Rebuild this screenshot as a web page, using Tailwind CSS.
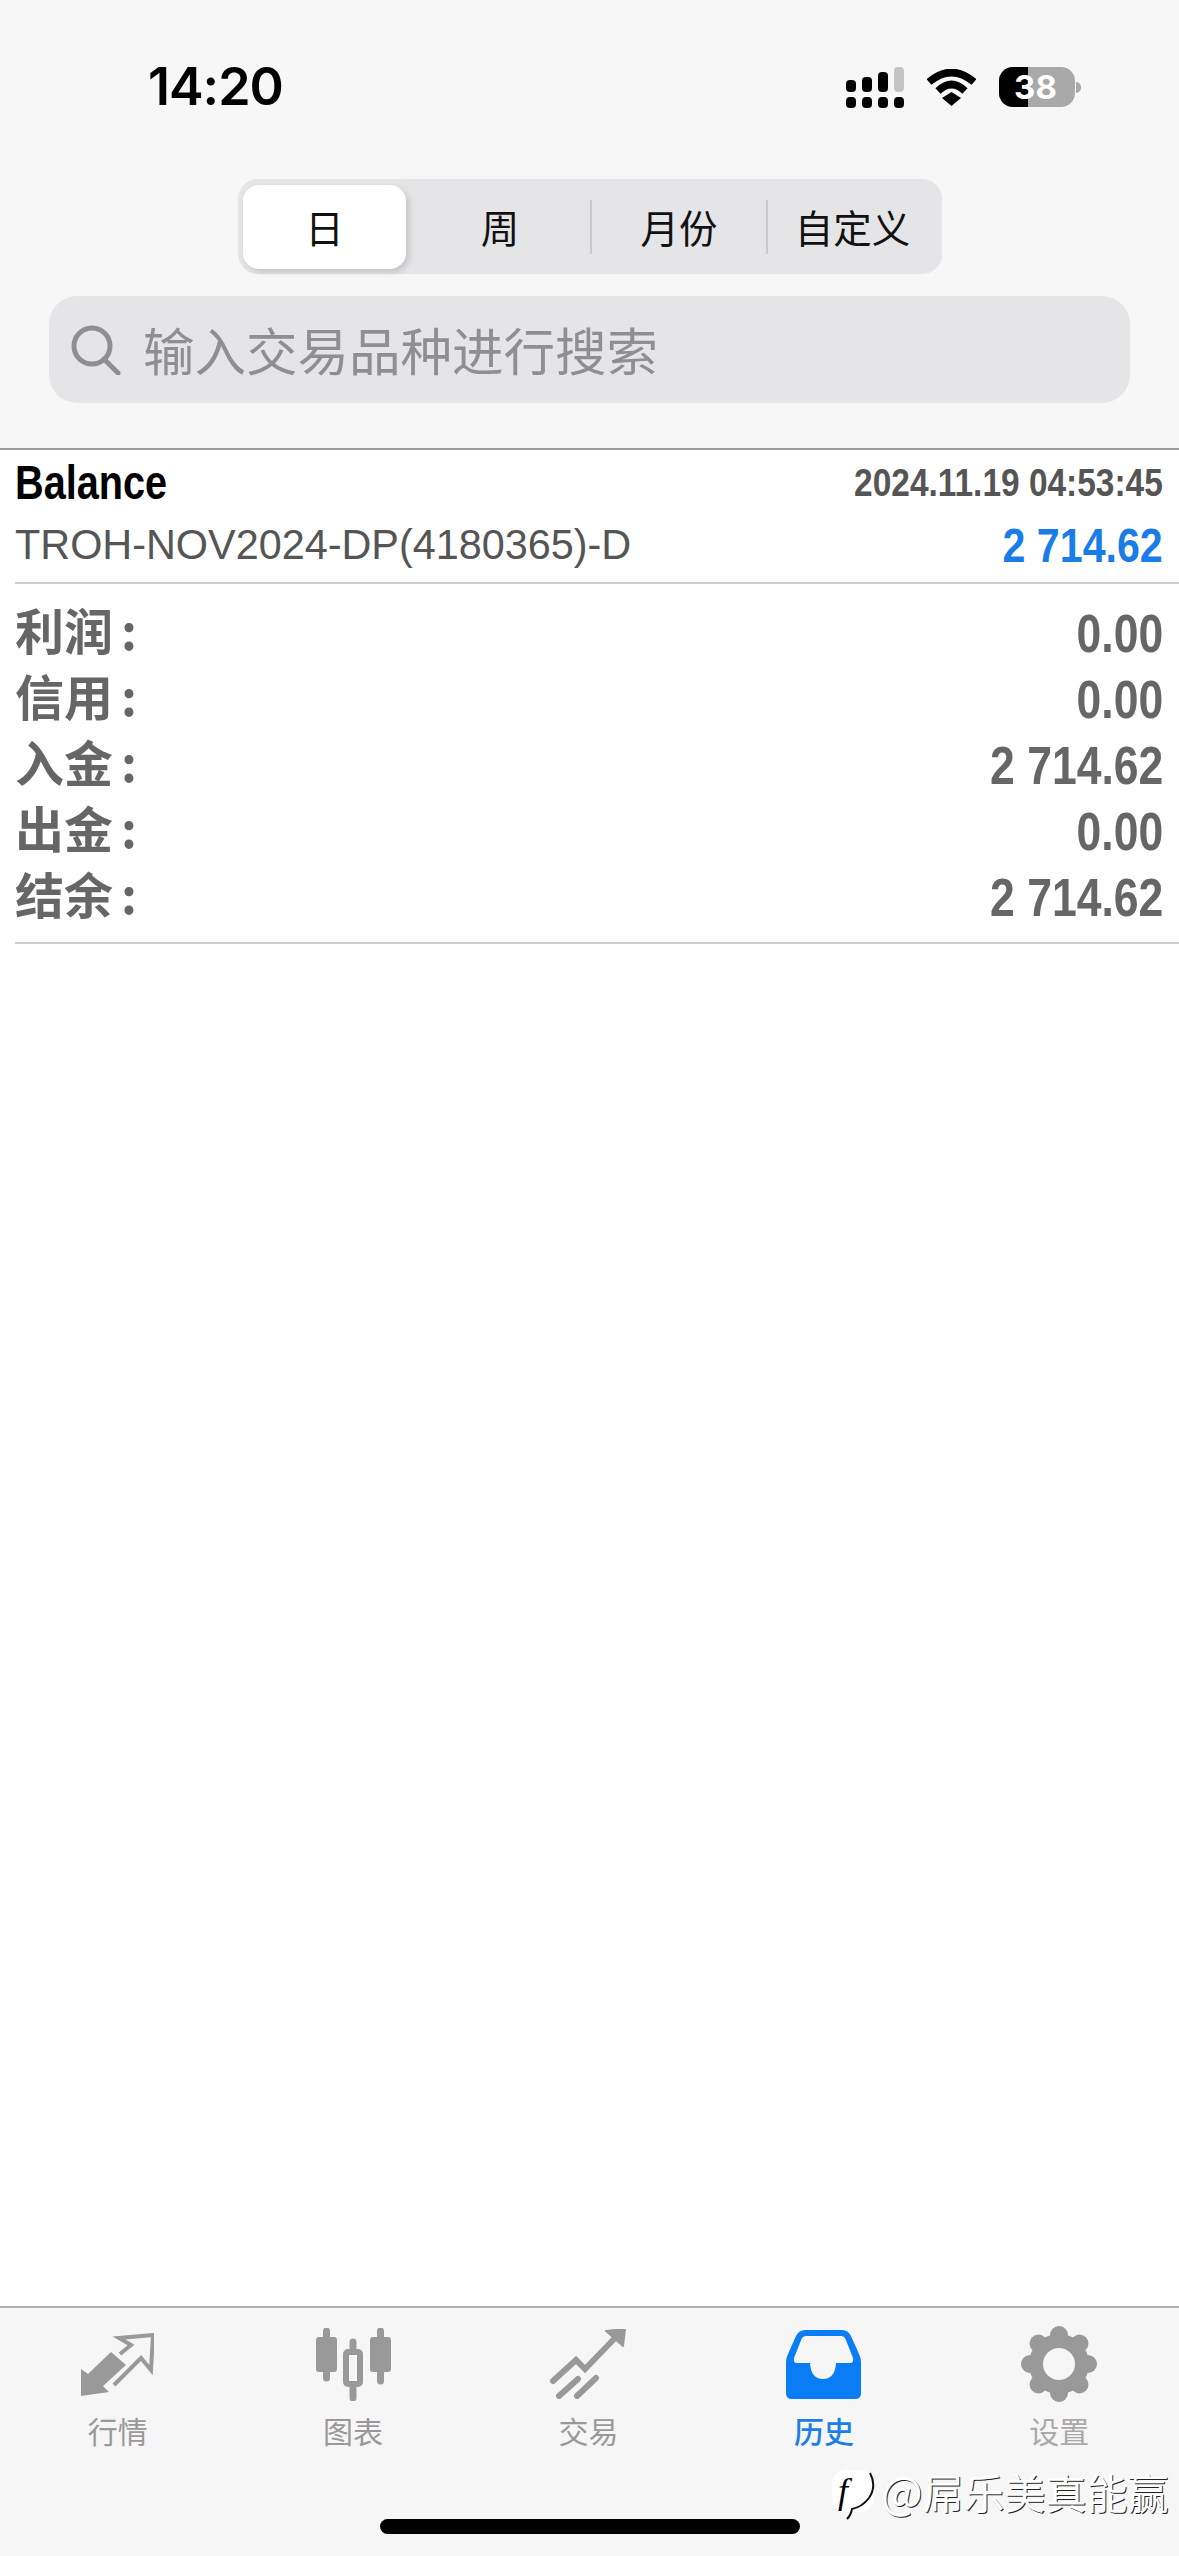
<!DOCTYPE html>
<html lang="zh-CN">
<head>
  <meta charset="UTF-8">
  <meta name="viewport" content="width=device-width, initial-scale=1.0">
  <title>历史</title>
  <script src="https://cdn.jsdelivr.net/npm/@tailwindcss/browser@4"></script>
</head>
<body class="bg-white font-['Liberation_Sans','Noto_Sans_CJK_SC',sans-serif]">
  <div class="relative w-[1179px] h-[2556px] overflow-hidden flex flex-col bg-white">

    <!-- top area -->
    <header class="h-[450px] shrink-0 bg-[#f7f7f7] border-b-2 border-[#9a9a9a] flex flex-col">
      <div class="h-[179px] shrink-0 pt-[67px] pl-[148px] pr-[98px] flex items-start justify-between">
        <span class="h-[40px] flex items-center font-['Inter'] text-[52px] font-semibold text-black tracking-[-1px] leading-none">14:20</span>
        <div class="flex items-start">
          <!-- signal -->
          <svg class="w-[58px] h-[41px]" viewBox="0 0 58 41">
            <rect x="0" y="13" width="10" height="12" rx="4"/>
            <rect x="16" y="10" width="10" height="15" rx="4"/>
            <rect x="32" y="5" width="10" height="20" rx="4"/>
            <rect x="48" y="0" width="10" height="25" rx="4" fill="#c4c4c4"/>
            <rect x="0" y="30" width="10" height="11" rx="4"/>
            <rect x="16" y="30" width="10" height="11" rx="4"/>
            <rect x="32" y="30" width="10" height="11" rx="4"/>
            <rect x="48" y="30" width="10" height="11" rx="4"/>
          </svg>
          <!-- wifi -->
          <svg class="ml-[23px] mt-[2px] w-[49px] h-[37px]" viewBox="0 0 49 37" fill="none" stroke="#000">
            <path d="M2 13 Q24.5 -6 47 13" stroke-width="7.5"/>
            <path d="M11 22 Q24.5 9 38 22" stroke-width="7.5"/>
            <path d="M15 29 L24.5 23 L34 29 L24.5 37 Z" fill="#000" stroke="none"/>
          </svg>
          <!-- battery -->
          <div class="ml-[23px] flex items-center">
            <div class="relative w-[76px] h-[40px] rounded-[14px] bg-[#a9a9a9] flex items-center justify-center">
              <div class="absolute left-0 top-0 bottom-0 w-[29px] rounded-l-[14px] bg-black"></div>
              <span class="relative pr-[3px] font-['Inter'] text-[33px] font-bold text-white leading-none">38</span>
            </div>
            <div class="ml-[1px] w-[5px] h-[11px] rounded-r-full bg-[#a9a9a9]"></div>
          </div>
        </div>
      </div>

      <!-- period tabs -->
      <div class="ml-[238px] w-[704px] h-[95px] shrink-0 rounded-[20px] bg-[#e5e5e7] py-[5px] pl-[5px] flex items-center text-[38.5px] text-[#111] font-['Noto_Sans_CJK_SC',sans-serif]">
        <div class="w-[163px] h-[84px] rounded-[16px] bg-white shadow-[3px_3px_6px_rgba(0,0,0,0.15)] flex items-center justify-center">日</div>
        <div class="w-[184px] pl-[4px] flex items-center justify-center">周</div>
        <div class="w-[176px] h-[54px] border-l-2 border-[#c9c9cb] flex items-center justify-center">月份</div>
        <div class="w-[171px] h-[54px] border-l-2 border-[#c9c9cb] flex items-center justify-center">自定义</div>
      </div>

      <!-- search -->
      <div class="mt-[22px] ml-[49px] w-[1081px] h-[107px] rounded-[28px] bg-[#e5e5e7] flex items-center pl-[22px]">
        <svg class="w-[50px] h-[50px] shrink-0" viewBox="0 0 50 50" fill="none" stroke="#8e8e93" stroke-width="5" stroke-linecap="round">
          <circle cx="21" cy="21" r="18"/>
          <path d="M33 34 L47 48"/>
        </svg>
        <span class="ml-[22px] pb-[2px] text-[51.5px] text-[#8e8e93] font-['Noto_Sans_CJK_SC',sans-serif] leading-none">输入交易品种进行搜索</span>
      </div>
    </header>

    <!-- history entry -->
    <main class="flex-1 pl-[15px]">
      <div class="h-[134px] border-b-2 border-[#cfcfcf] pr-[16px] flex flex-col">
        <div class="h-[66px] flex items-center justify-between">
          <span class="inline-block origin-left scale-x-[0.826] text-[48px] font-bold text-black leading-none">Balance</span>
          <span class="inline-block origin-right scale-x-[0.88] text-[38px] font-bold text-[#555] leading-none whitespace-nowrap">2024.11.19 04:53:45</span>
        </div>
        <div class="h-[58px] flex items-center justify-between">
          <span class="inline-block origin-left scale-x-[0.985] text-[42px] text-[#555] leading-none whitespace-nowrap">TROH-NOV2024-DP(4180365)-D</span>
          <span class="inline-block origin-right scale-x-[0.84] text-[49px] font-bold text-[#1a7ce8] leading-none whitespace-nowrap">2 714.62</span>
        </div>
      </div>
      <div class="h-[360px] border-b-2 border-[#cfcfcf] pr-[16px] pt-[16px] text-[#666] font-bold">
        <div class="h-[66px] flex items-center justify-between"><span class="pb-[10px] text-[49px] leading-none font-['Noto_Sans_CJK_SC',sans-serif]">利润<span class="ml-[8px]">:</span></span><span class="inline-block origin-right scale-x-[0.84] text-[53px] leading-none">0.00</span></div>
        <div class="h-[66px] flex items-center justify-between"><span class="pb-[10px] text-[49px] leading-none font-['Noto_Sans_CJK_SC',sans-serif]">信用<span class="ml-[8px]">:</span></span><span class="inline-block origin-right scale-x-[0.84] text-[53px] leading-none">0.00</span></div>
        <div class="h-[66px] flex items-center justify-between"><span class="pb-[10px] text-[49px] leading-none font-['Noto_Sans_CJK_SC',sans-serif]">入金<span class="ml-[8px]">:</span></span><span class="inline-block origin-right scale-x-[0.84] text-[53px] leading-none">2 714.62</span></div>
        <div class="h-[66px] flex items-center justify-between"><span class="pb-[10px] text-[49px] leading-none font-['Noto_Sans_CJK_SC',sans-serif]">出金<span class="ml-[8px]">:</span></span><span class="inline-block origin-right scale-x-[0.84] text-[53px] leading-none">0.00</span></div>
        <div class="h-[66px] flex items-center justify-between"><span class="pb-[10px] text-[49px] leading-none font-['Noto_Sans_CJK_SC',sans-serif]">结余<span class="ml-[8px]">:</span></span><span class="inline-block origin-right scale-x-[0.84] text-[53px] leading-none">2 714.62</span></div>
      </div>
    </main>

    <!-- tab bar -->
    <footer class="h-[250px] shrink-0 bg-[#f6f6f6] border-t-2 border-[#b0b0b0] flex flex-col">
      <nav class="w-[1177px] h-[140px] pt-[18px] grid grid-cols-5 text-[30px] text-[#999] font-['Noto_Sans_CJK_SC',sans-serif]">
        <div class="flex flex-col items-center">
          <div class="h-[76px] flex items-center">
            <svg class="w-[73px] h-[63px]" viewBox="0 0 73 63">
              <path d="M0 63 L0 36 L7 41 L30 19 L45 32 L22 53 L28 59 Z" fill="#999"/>
              <path d="M39 21 L50 12 L38 5 L72 2 L70 37 L60 25 L33 52" fill="none" stroke="#999" stroke-width="4"/>
            </svg>
          </div>
          <span class="mt-[13px] leading-none">行情</span>
        </div>
        <div class="flex flex-col items-center">
          <div class="h-[76px] flex items-center">
            <svg class="w-[75px] h-[73px]" viewBox="0 0 75 73">
              <path d="M10.5 3 V50 M37 14 V70 M64.5 3 V53" stroke="#999" stroke-width="7" stroke-linecap="round"/>
              <rect x="0" y="9" width="21" height="35" rx="3" fill="#999"/>
              <rect x="54" y="9" width="21" height="35" rx="3" fill="#999"/>
              <rect x="30" y="24" width="14" height="32" rx="2" fill="#f6f6f6" stroke="#999" stroke-width="6"/>
            </svg>
          </div>
          <span class="mt-[13px] leading-none">图表</span>
        </div>
        <div class="flex flex-col items-center">
          <div class="h-[76px] flex items-center">
            <svg class="w-[76px] h-[70px]" viewBox="0 0 76 70" fill="none" stroke="#999" stroke-width="6" stroke-linecap="round">
              <path d="M3 52 L26 31 L35 40 L65 9"/>
              <path d="M9 67 L28 50 M27 67 L46 49"/>
              <path d="M56 2 L75 0 L73 17 Z" fill="#999" stroke-width="2" stroke-linejoin="round"/>
            </svg>
          </div>
          <span class="mt-[13px] leading-none">交易</span>
        </div>
        <div class="flex flex-col items-center">
          <div class="h-[76px] flex items-center">
            <svg class="w-[75px] h-[69px]" viewBox="0 0 75 69">
              <path fill="#0a7cf5" fill-rule="evenodd" d="M19 0 H56 Q62 0 65 6 L73 24 Q75 28 75 32 V63 Q75 69 69 69 H6 Q0 69 0 63 V32 Q0 28 2 24 L10 6 Q13 0 19 0 Z M20 6 Q17 6 15.5 9 L8 28 Q7 33 11 33 H24 Q25 49 37 49 Q49 49 50 33 H64 Q68 33 67 28 L59.5 9 Q58 6 55 6 Z"/>
            </svg>
          </div>
          <span class="mt-[13px] leading-none text-[#1a7fe8] font-medium">历史</span>
        </div>
        <div class="flex flex-col items-center">
          <div class="h-[76px] flex items-center">
            <svg class="w-[76px] h-[76px]" viewBox="0 0 76 76" fill="#999">
              <circle cx="38" cy="38" r="30"/>
              <circle cx="38" cy="9" r="9"/>
              <circle cx="38" cy="67" r="9"/>
              <circle cx="9" cy="38" r="9"/>
              <circle cx="67" cy="38" r="9"/>
              <circle cx="17.5" cy="17.5" r="9"/>
              <circle cx="58.5" cy="17.5" r="9"/>
              <circle cx="17.5" cy="58.5" r="9"/>
              <circle cx="58.5" cy="58.5" r="9"/>
              <circle cx="38" cy="38" r="16" fill="#f6f6f6"/>
            </svg>
          </div>
          <span class="mt-[13px] leading-none text-[#aaa]">设置</span>
        </div>
      </nav>
      <div class="mt-[71px] ml-[380px] w-[420px] h-[15px] rounded-full bg-black"></div>
    </footer>

    <!-- watermark over the tab bar -->
    <div class="absolute left-[832px] top-[2466px] flex items-start text-[41px] text-white leading-none font-['Noto_Sans_CJK_SC',sans-serif] [text-shadow:1px_1px_0_#222] whitespace-nowrap">
      <div class="relative mt-[4px] w-[42px] h-[42px] rounded-[14px] bg-white pl-[6px] flex items-center font-['Liberation_Serif',serif] italic text-[36px] text-black [text-shadow:none]">
        f
        <svg class="absolute left-0 top-0 w-[44px] h-[52px]" viewBox="0 0 44 52" fill="none" stroke="#111" stroke-width="2">
          <path d="M38 3 Q45 16 37 28 Q30 37 20 39 Q19 45 15 49"/>
        </svg>
      </div>
      <span class="ml-[7px] mt-[2px]"><span class="text-[44px]">@</span>屌乐美真能赢</span>
    </div>
  </div>
</body>
</html>
